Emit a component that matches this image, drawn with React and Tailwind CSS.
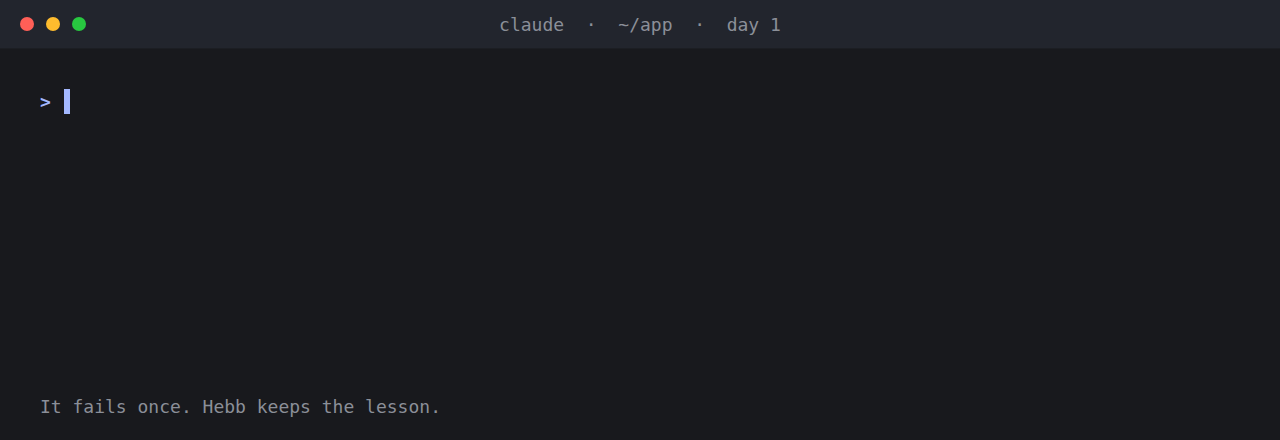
const App = () => {
  return (
    <div className="flex h-[440px] w-[1280px] flex-col bg-[#18191d] font-['DejaVu_Sans_Mono',monospace]">
      {/* title bar */}
      <div className="flex h-[49px] shrink-0 items-center border-b border-[#1c1e23] bg-[#22252d] px-5">
        <div className="flex gap-3">
          <span className="h-[14px] w-[14px] rounded-full bg-[#ff5f57]" />
          <span className="h-[14px] w-[14px] rounded-full bg-[#febc2e]" />
          <span className="h-[14px] w-[14px] rounded-full bg-[#28c840]" />
        </div>
        <div className="flex flex-1 justify-center pr-[66px] text-[18px] whitespace-pre text-[#8b8f98]">
          claude  ·  ~/app  ·  day 1
        </div>
      </div>

      {/* terminal body */}
      <div className="flex flex-1 flex-col justify-between px-10 pt-[39px] pb-5">
        <div className="flex h-[26px] items-center gap-[13px] text-[18px] font-bold text-[#a3b8ff]">
          <span>&gt;</span>
          <span className="h-[25px] w-[6px] bg-[#a3b8ff]" />
        </div>
        <div className="h-[26px] text-[18px] leading-[26px] text-[#8b8f98]">
          It fails once. Hebb keeps the lesson.
        </div>
      </div>
    </div>
  );
};

export default App;
